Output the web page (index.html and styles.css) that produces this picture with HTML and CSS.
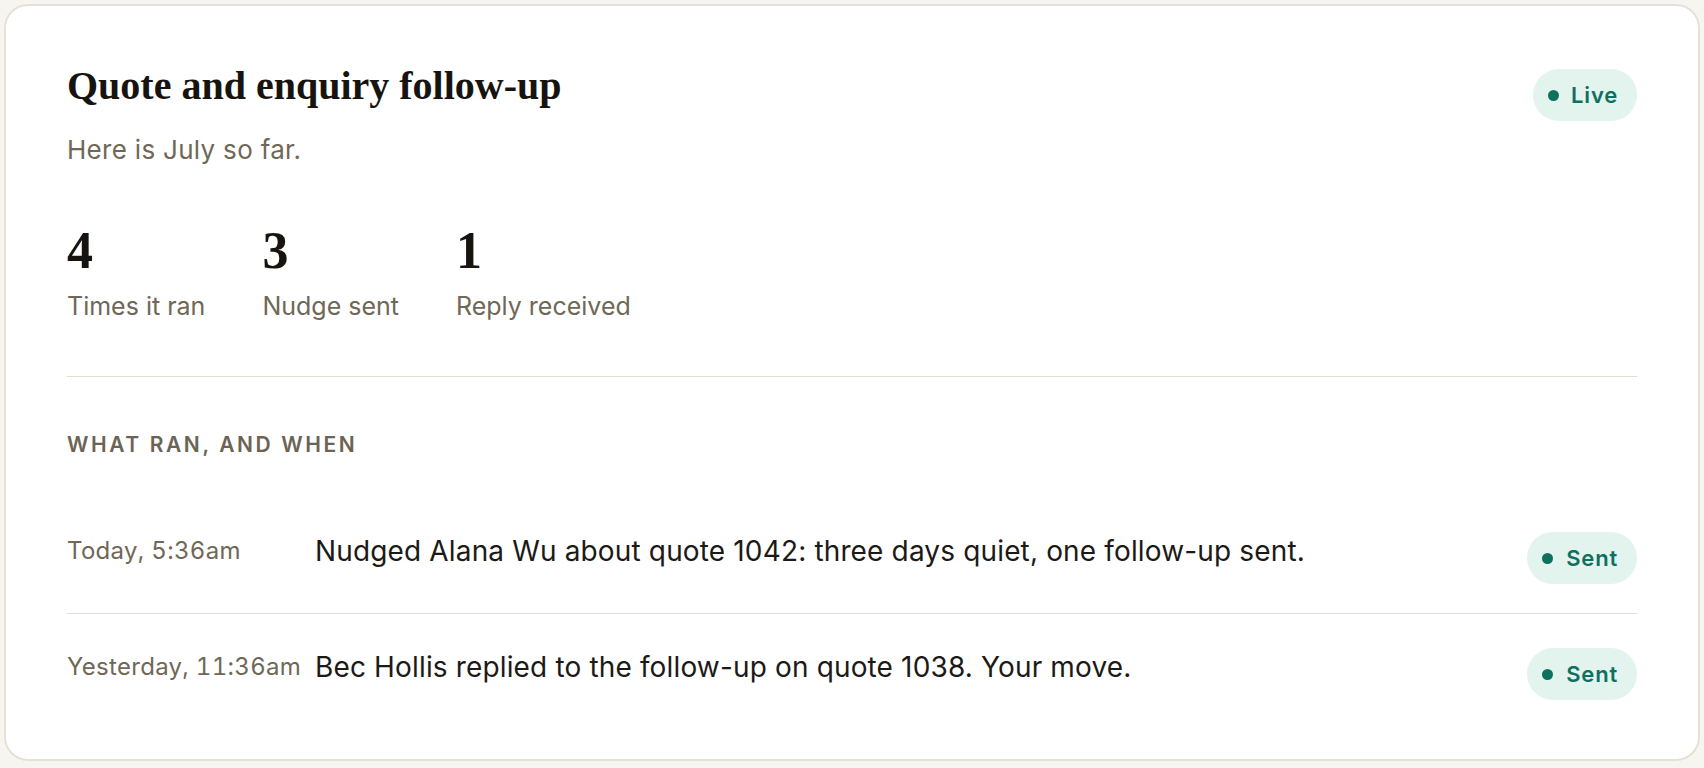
FILE: index.html
```html
<!DOCTYPE html>
<html lang="en">
<head>
<meta charset="utf-8">
<title>Quote and enquiry follow-up</title>
<link rel="stylesheet" href="styles.css">
</head>
<body>
  <section class="card">
    <header class="card-header">
      <div class="heading-block">
        <h1 class="title">Quote and enquiry follow-up</h1>
        <p class="subtitle">Here is July so far.</p>
      </div>
      <span class="pill pill-live"><span class="dot"></span>Live</span>
    </header>

    <div class="stats">
      <div class="stat">
        <div class="stat-value">4</div>
        <div class="stat-label">Times it ran</div>
      </div>
      <div class="stat">
        <div class="stat-value">3</div>
        <div class="stat-label">Nudge sent</div>
      </div>
      <div class="stat">
        <div class="stat-value">1</div>
        <div class="stat-label">Reply received</div>
      </div>
    </div>

    <div class="log">
      <h2 class="log-heading">WHAT RAN, AND WHEN</h2>
      <ul class="log-list">
        <li class="log-row">
          <span class="log-time">Today, 5:36am</span>
          <span class="log-text">Nudged Alana Wu about quote 1042: three days quiet, one follow-up sent.</span>
          <span class="pill"><span class="dot"></span>Sent</span>
        </li>
        <li class="log-row">
          <span class="log-time">Yesterday, 11:36am</span>
          <span class="log-text">Bec Hollis replied to the follow-up on quote 1038. Your move.</span>
          <span class="pill"><span class="dot"></span>Sent</span>
        </li>
      </ul>
    </div>
  </section>
</body>
</html>
```

FILE: styles.css
```css
* { box-sizing: border-box; }

html, body {
  margin: 0;
  background: #f7f5f0;
}

body {
  padding: 4px;
  font-family: Inter, "Noto Sans", "Liberation Sans", sans-serif;
  color: #1c1a16;
}

.card {
  background: #ffffff;
  border: 2px solid #e6e1d6;
  border-radius: 24px;
  padding: 56px 61px 59px 61px;
}

.card-header {
  display: flex;
  justify-content: space-between;
  align-items: flex-start;
}

.title {
  margin: 0;
  font-family: "Liberation Serif", "Times New Roman", serif;
  font-weight: 700;
  font-size: 40px;
  line-height: 48px;
  color: #17140f;
}

.subtitle {
  margin: 22px 0 0 0;
  font-size: 26px;
  line-height: 36px;
  letter-spacing: 0.3px;
  color: #6f6757;
}

.pill {
  display: inline-flex;
  align-items: center;
  gap: 13px;
  height: 52px;
  padding: 0 19px 0 15px;
  border-radius: 26px;
  background: #e3f3ee;
  color: #10705f;
  font-size: 22px;
  font-weight: 600;
  letter-spacing: 0.8px;
  white-space: nowrap;
}

.pill-live {
  margin-top: 7px;
  padding-left: 15px;
  gap: 12px;
}

.dot {
  width: 11px;
  height: 11px;
  border-radius: 50%;
  background: #10705f;
  flex: none;
}

.stats {
  display: flex;
  gap: 57px;
  margin-top: 57px;
  padding-bottom: 52px;
  border-bottom: 1px solid #e2ddd1;
}

.stat-value {
  font-family: "Liberation Serif", "Times New Roman", serif;
  font-weight: 700;
  font-size: 52px;
  line-height: 52px;
  color: #17140f;
}

.stat-label {
  margin-top: 12px;
  font-size: 25px;
  line-height: 35px;
  color: #6f6757;
}

.log {
  padding-top: 54px;
}

.log-heading {
  margin: 0;
  font-size: 21px;
  line-height: 28px;
  font-weight: 600;
  letter-spacing: 2.6px;
  color: #6b6454;
}

.log-list {
  list-style: none;
  margin: 39px 0 0 0;
  padding: 0;
}

.log-row {
  display: grid;
  grid-template-columns: 234px 1fr auto;
  column-gap: 14px;
  align-items: start;
  padding: 34px 0 29px 0;
  border-bottom: 1px solid #e2ddd1;
}

.log-row:last-child {
  border-bottom: none;
  padding-bottom: 0;
}

.log-time {
  font-size: 24px;
  line-height: 38px;
  letter-spacing: 0.3px;
  font-variant-numeric: tabular-nums;
  color: #6f6757;
  white-space: nowrap;
}

.log-text {
  font-size: 28px;
  line-height: 38px;
  letter-spacing: 0.15px;
  color: #1c1a16;
}
```
